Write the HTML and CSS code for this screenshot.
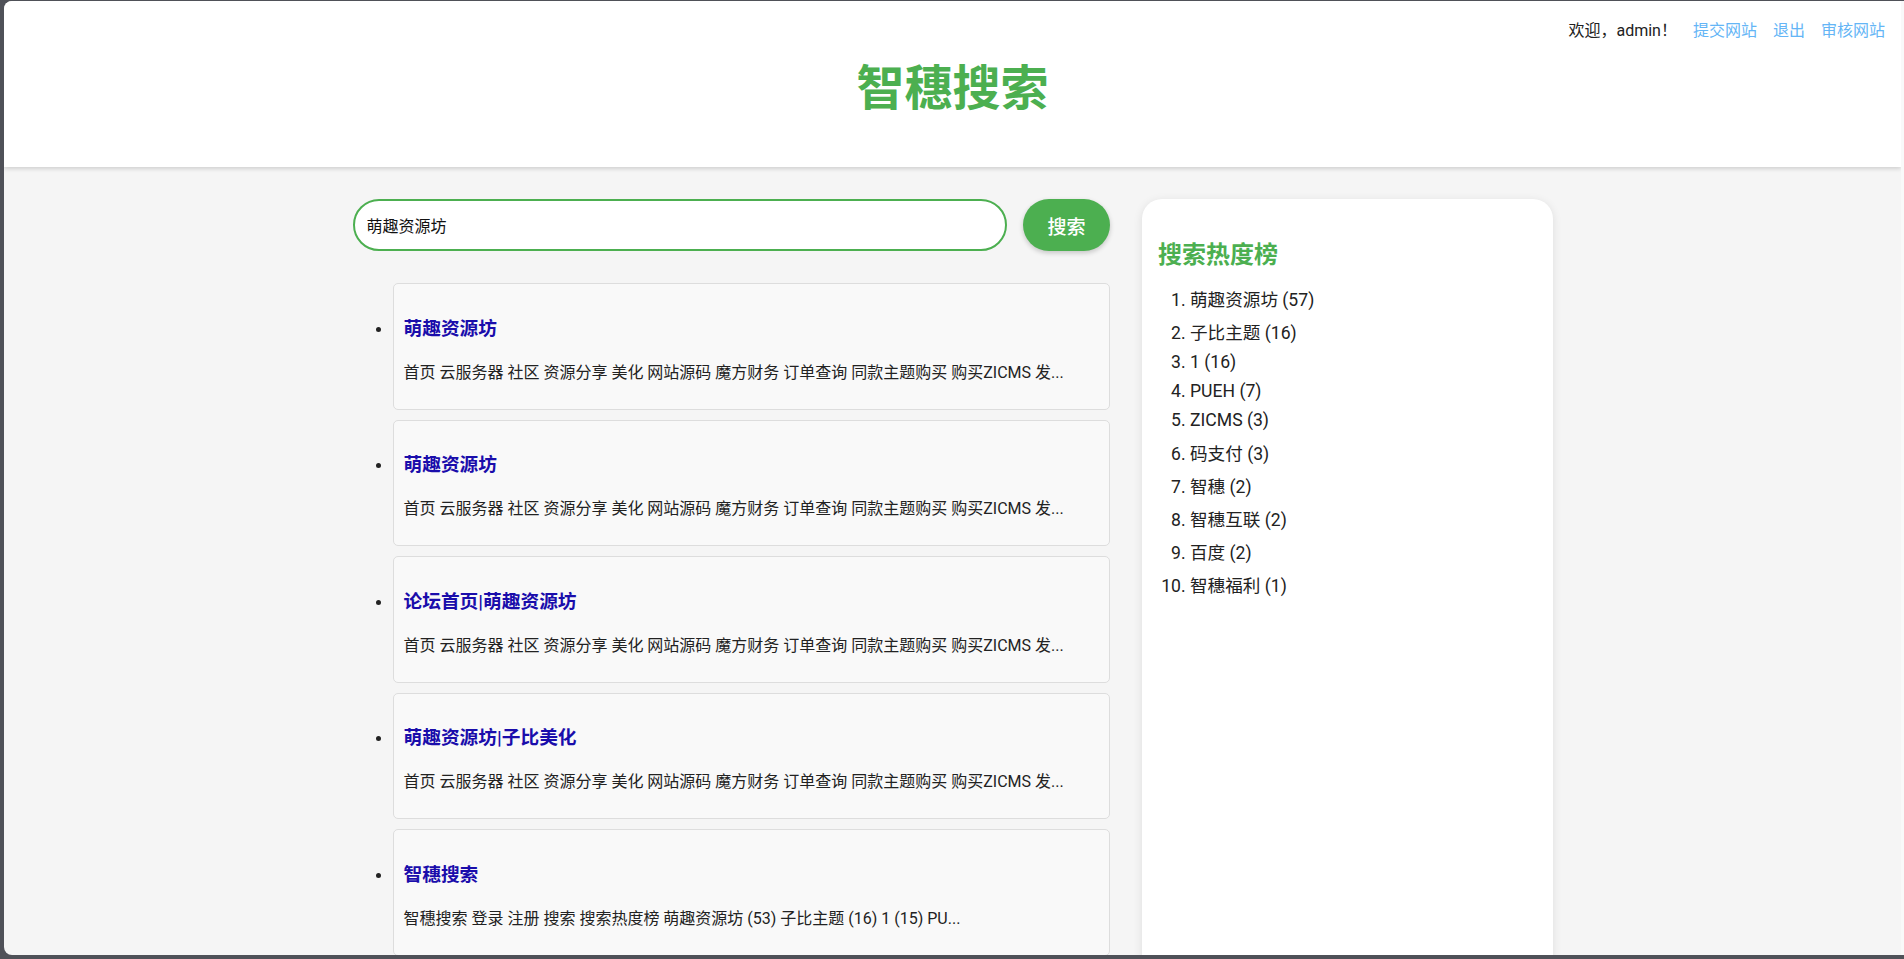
FILE: index.html
```html
<!DOCTYPE html>
<html lang="zh-CN">
<head>
<meta charset="utf-8">
<title>智穗搜索</title>
<link rel="stylesheet" href="styles.css">
</head>
<body>
<div class="window">
  <div class="page">
    <header class="site-header">
      <h1 class="brand">智穗搜索</h1>
      <nav class="user-nav">
        <span class="welcome">欢迎，admin！</span>
        <a href="#">提交网站</a>
        <a href="#">退出</a>
        <a href="#">审核网站</a>
      </nav>
    </header>
    <main class="container">
      <section class="results-col">
        <form class="search-form">
          <input class="search-input" type="text" value="萌趣资源坊">
          <button class="search-btn" type="button">搜索</button>
        </form>
        <ul class="results">
          <li class="result"><h3><a href="#">萌趣资源坊</a></h3><p>首页 云服务器 社区 资源分享 美化 网站源码 魔方财务 订单查询 同款主题购买 购买ZICMS 发...</p></li>
          <li class="result"><h3><a href="#">萌趣资源坊</a></h3><p>首页 云服务器 社区 资源分享 美化 网站源码 魔方财务 订单查询 同款主题购买 购买ZICMS 发...</p></li>
          <li class="result"><h3><a href="#">论坛首页|萌趣资源坊</a></h3><p>首页 云服务器 社区 资源分享 美化 网站源码 魔方财务 订单查询 同款主题购买 购买ZICMS 发...</p></li>
          <li class="result"><h3><a href="#">萌趣资源坊|子比美化</a></h3><p>首页 云服务器 社区 资源分享 美化 网站源码 魔方财务 订单查询 同款主题购买 购买ZICMS 发...</p></li>
          <li class="result"><h3><a href="#">智穗搜索</a></h3><p>智穗搜索 登录 注册 搜索 搜索热度榜 萌趣资源坊 (53) 子比主题 (16) 1 (15) PU...</p></li>
        </ul>
      </section>
      <aside class="hot-panel">
        <h2>搜索热度榜</h2>
        <ol class="hot-list">
          <li>萌趣资源坊 (57)</li>
          <li>子比主题 (16)</li>
          <li>1 (16)</li>
          <li>PUEH (7)</li>
          <li>ZICMS (3)</li>
          <li>码支付 (3)</li>
          <li>智穗 (2)</li>
          <li>智穗互联 (2)</li>
          <li>百度 (2)</li>
          <li>智穗福利 (1)</li>
        </ol>
      </aside>
    </main>
  </div>
  <div class="edge"></div>
</div>
</body>
</html>
```
FILE: styles.css
```css
html, body {
  margin: 0;
  height: 100%;
  overflow: hidden;
}
body {
  background: #4f5158;
  padding: 1px 0 4px 4px;
  box-sizing: border-box;
  font-family: Roboto, "Noto Sans CJK SC", sans-serif;
  font-size: 16px;
  color: #222;
}
.window {
  display: flex;
  height: 100%;
  overflow: hidden;
  border-radius: 8px 0 0 8px;
  background: #f5f5f5;
}
.page {
  flex: 1;
  min-width: 0;
  overflow: hidden;
}
.edge {
  width: 3px;
  background: #f9f9f9;
}
.site-header {
  position: relative;
  background: #fff;
  padding: 16px;
  text-align: center;
  box-shadow: 0 2px 4px rgba(0, 0, 0, 0.15);
}
.brand {
  margin: 32px 0;
  font-size: 48px;
  font-weight: 700;
  color: #4caf50;
}
.user-nav {
  position: absolute;
  top: 16px;
  right: 16px;
  display: flex;
  color: #222;
}
.user-nav a {
  margin-left: 16px;
  color: #64b5f6;
  text-decoration: none;
}
.container {
  display: flex;
  gap: 32px;
  width: 1200px;
  margin: 0 auto;
  padding-top: 32px;
}
.results-col {
  width: 757.5px;
  flex: none;
  padding-bottom: 60px;
}
.search-form {
  display: flex;
  gap: 16px;
  margin-bottom: 32px;
}
.search-input {
  flex: 1;
  min-width: 0;
  box-sizing: border-box;
  border: 2px solid #4caf50;
  border-radius: 26px;
  padding: 0 12px;
  font: inherit;
  color: #111;
  background: #fff;
  outline: none;
}
.search-btn {
  border: 0;
  border-radius: 26px;
  height: 52px;
  padding: 0 24.5px;
  background: #4caf50;
  color: #fff;
  font: inherit;
  font-size: 19px;
  font-weight: 500;
  box-shadow: 0 2px 5px rgba(0, 0, 0, 0.2);
}
.results {
  margin: 0;
  padding-left: 40px;
}
.result {
  background: #f9f9f9;
  border: 1px solid #ddd;
  border-radius: 5px;
  padding: 10px;
  margin-bottom: 10px;
}
.result h3 {
  margin: 18.72px 0 19.2px;
  font-size: 18.72px;
}
.result h3 a {
  color: #1a0dab;
  text-decoration: none;
}
.result p {
  margin: 0 0 15.62px;
}
.hot-panel {
  flex: 1;
  min-width: 0;
  background: #fff;
  border-radius: 20px;
  padding: 16px;
  box-shadow: 0 2px 10px rgba(0, 0, 0, 0.1);
}
.hot-panel h2 {
  margin: 20px 0 16px;
  font-size: 24px;
  font-weight: 700;
  color: #4caf50;
}
.hot-list {
  margin: 0;
  padding-left: 32px;
  font-size: 17.6px;
  color: #222;
}
.hot-list li {
  min-height: 21.2px;
  margin-bottom: 8px;
}
```
